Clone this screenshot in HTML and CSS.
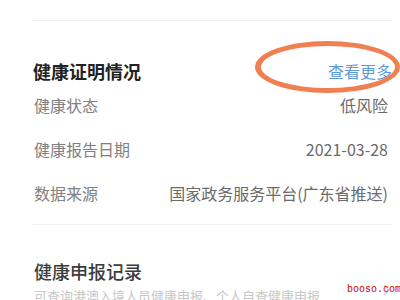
FILE: index.html
```html
<!DOCTYPE html>
<html>
<head>
<meta charset="utf-8">
<link rel="stylesheet" href="styles.css">
</head>
<body>
<div class="page">
  <div class="top-line"></div>
  <div class="section-head">
    <span class="title">健康证明情况</span>
    <span class="more">查看更多</span>
  </div>
  <div class="row"><span class="label">健康状态</span><span class="value">低风险</span></div>
  <div class="row"><span class="label">健康报告日期</span><span class="value">2021-03-28</span></div>
  <div class="row"><span class="label">数据来源</span><span class="value">国家政务服务平台(广东省推送)</span></div>
  <div class="divider"></div>
  <div class="section2">
    <div class="title2">健康申报记录</div>
    <div class="sub">可查询港澳入境人员健康申报、个人自查健康申报</div>
  </div>
  <svg class="chev" width="8" height="12" viewBox="0 0 8 12"><path d="M1 1 L6 6 L1 11" fill="none" stroke="#ccc" stroke-width="1.4"/></svg>
  <div class="ellipse"></div>
  <div class="wm">booso.com</div>
</div>
</body>
</html>
```
FILE: styles.css
```css
html, body {
  margin: 0;
  padding: 0;
  background: #fff;
}
.page {
  position: relative;
  width: 400px;
  height: 300px;
  overflow: hidden;
  font-family: "Noto Sans CJK SC", "Noto Sans", sans-serif;
}
.top-line {
  height: 20px;
  margin-left: 32px;
  margin-right: 8px;
  border-bottom: 1px solid #f0f0f0;
}
.section-head {
  display: flex;
  justify-content: space-between;
  align-items: center;
  height: 24px;
  margin-top: 38px;
  padding: 0 8px 0 33px;
}
.title {
  font-size: 18px;
  font-weight: 700;
  color: #222;
}
.more {
  font-size: 16px;
  color: #5d9bd6;
}
.row {
  display: flex;
  justify-content: space-between;
  align-items: center;
  height: 44px;
  padding: 0 12px 0 34px;
  font-size: 16px;
}
.label {
  color: #808080;
}
.value {
  color: #6a6a6a;
}
.divider {
  margin: 9px 8px 0 32px;
  border-top: 1px solid #f2f2f2;
}
.section2 {
  padding: 34px 0 0 34px;
}
.title2 {
  font-size: 18px;
  line-height: 24px;
  color: #3c3c3c;
  font-weight: 500;
}
.sub {
  margin-top: 3px;
  font-size: 13px;
  line-height: 20px;
  color: #c8c8c8;
  white-space: nowrap;
}
.chev {
  position: absolute;
  left: 383px;
  top: 284px;
}
.ellipse {
  position: absolute;
  left: 255px;
  top: 41px;
  width: 145px;
  height: 52px;
  box-sizing: border-box;
  border: 5px solid #f08052;
  border-left-width: 6px;
  border-radius: 50%;
}
.wm {
  position: absolute;
  left: 347px;
  top: 283px;
  font-family: "Liberation Mono", monospace;
  font-size: 10px;
  line-height: 14px;
  color: #d40000;
  padding-right: 4px;
}
```
